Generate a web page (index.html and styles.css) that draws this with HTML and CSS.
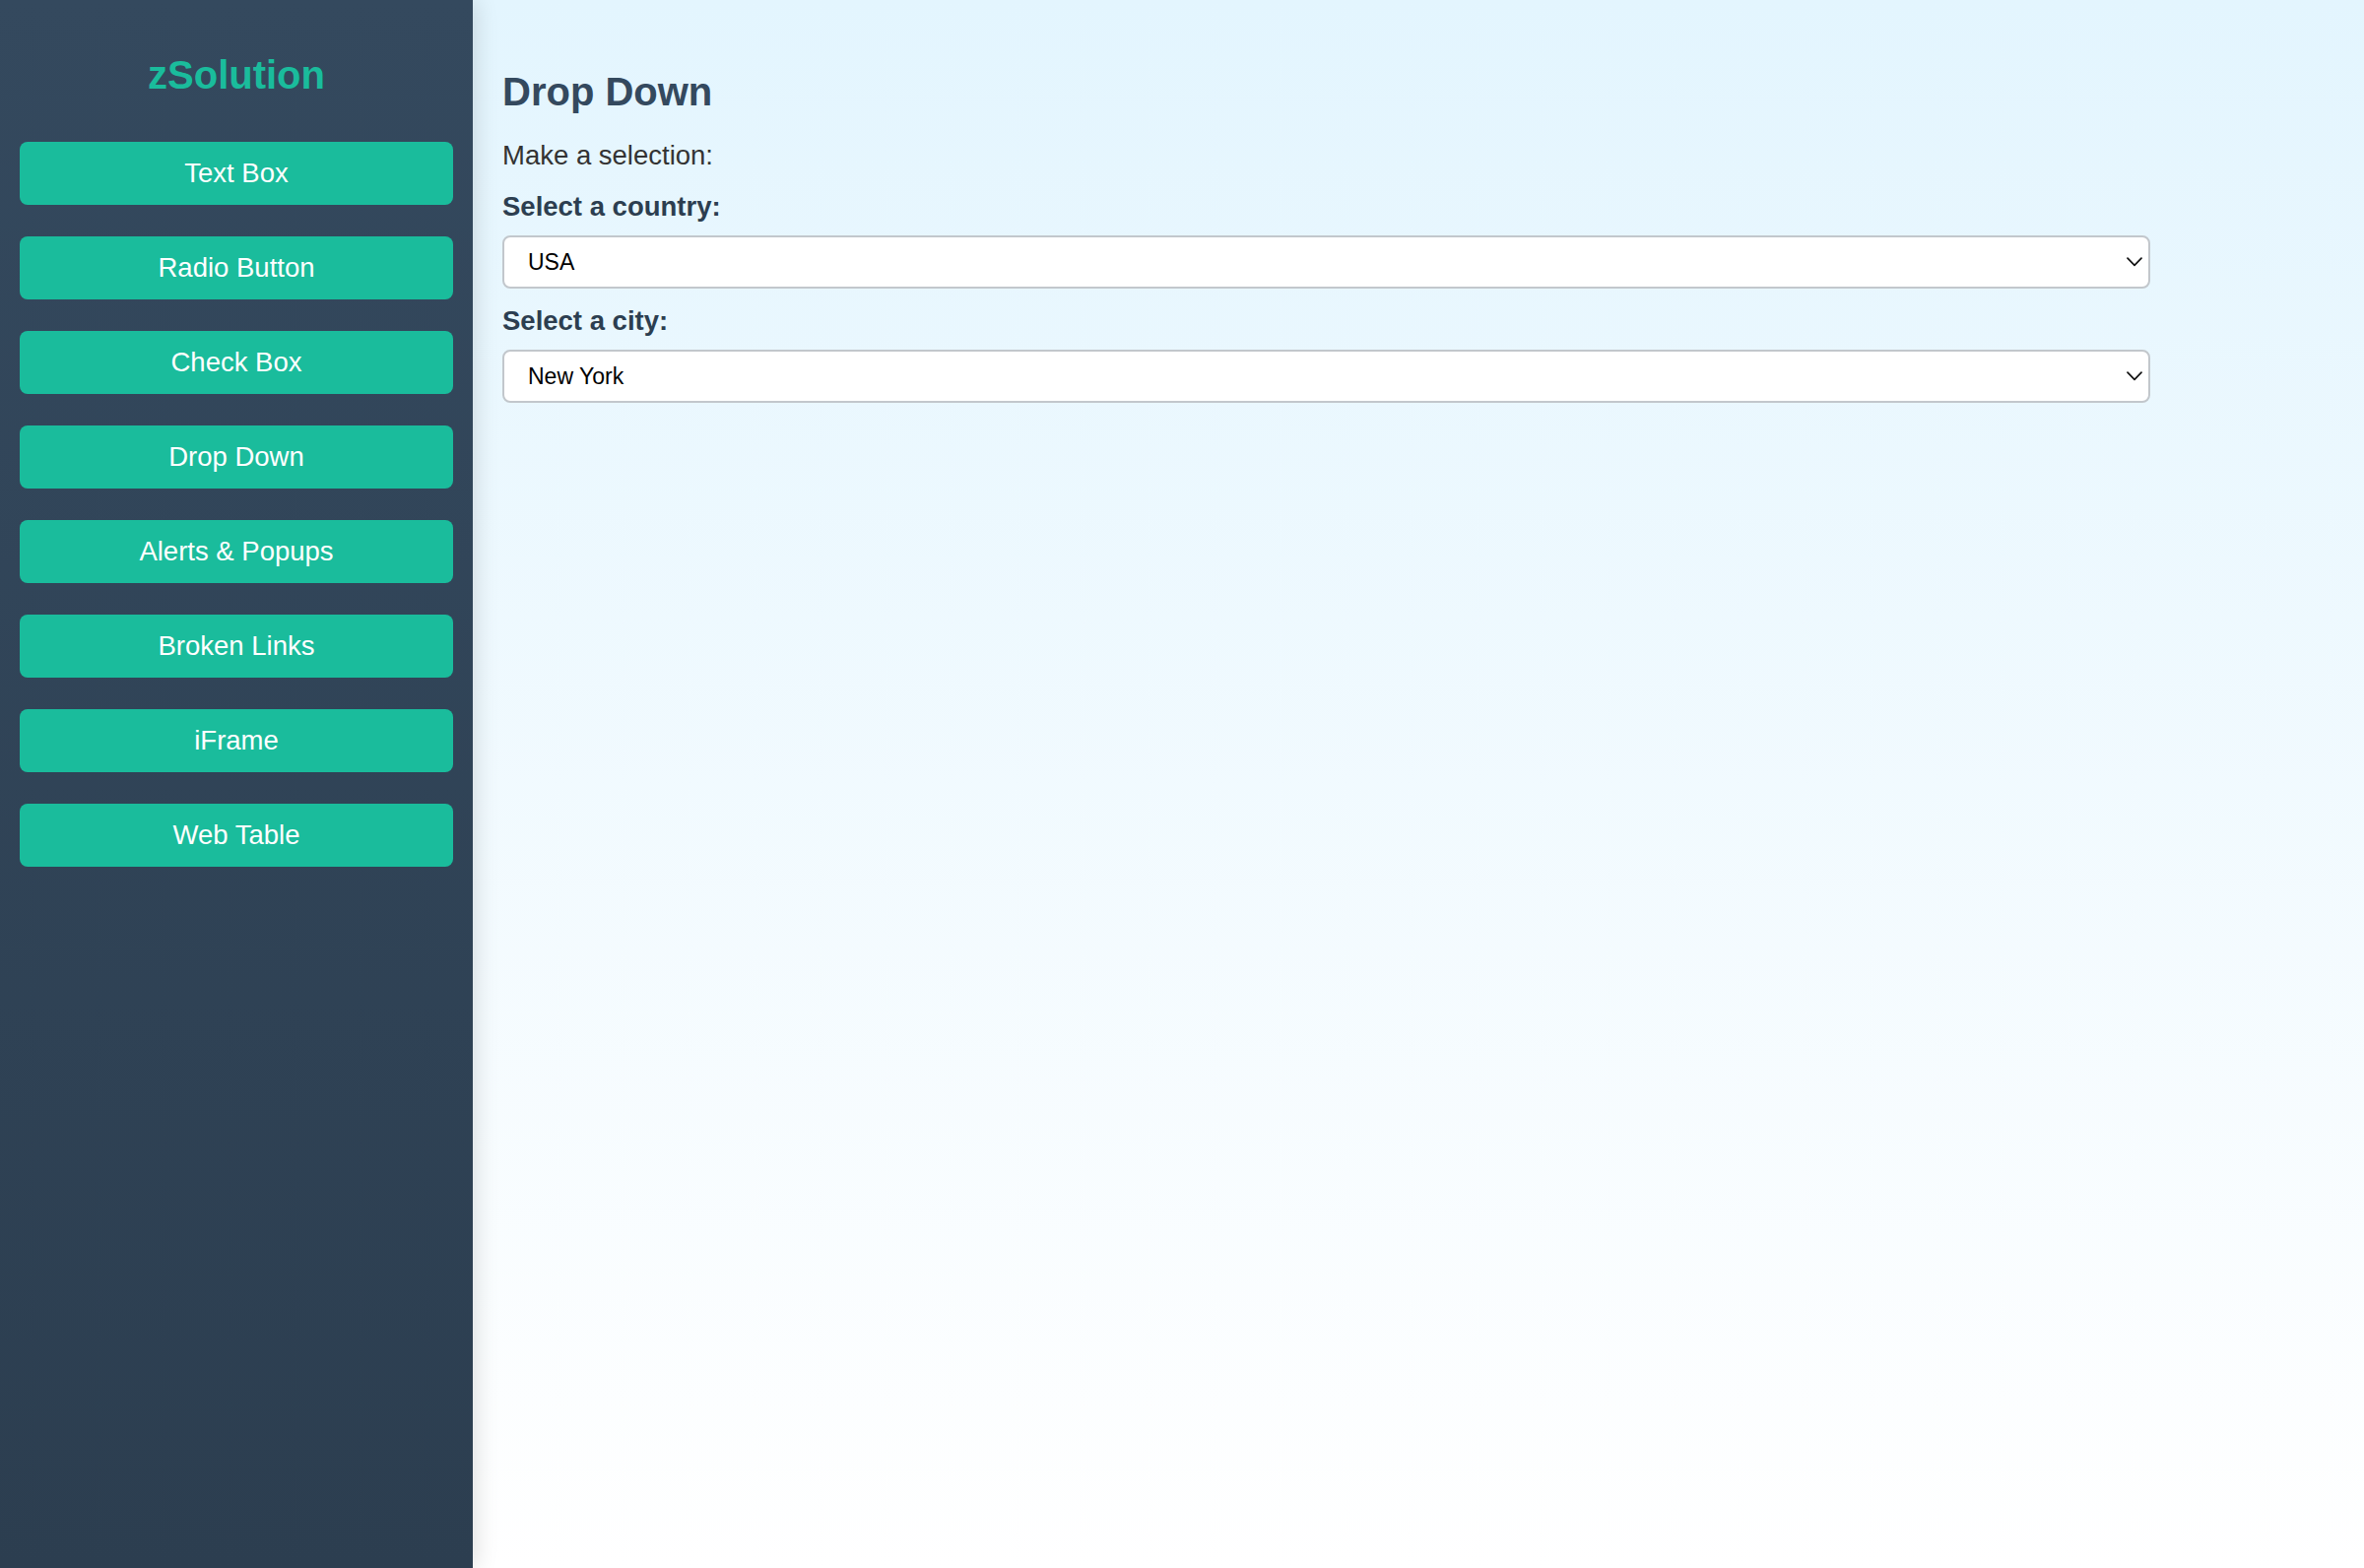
FILE: index.html
```html
<!DOCTYPE html>
<html lang="en">
<head>
<meta charset="utf-8">
<title>zSolution - Drop Down</title>
<link rel="stylesheet" href="styles.css">
</head>
<body>
<div class="layout">
  <aside class="sidebar">
    <h2 class="logo">zSolution</h2>
    <nav class="nav">
      <a class="nav-btn" href="#">Text Box</a>
      <a class="nav-btn" href="#">Radio Button</a>
      <a class="nav-btn" href="#">Check Box</a>
      <a class="nav-btn" href="#">Drop Down</a>
      <a class="nav-btn" href="#">Alerts &amp; Popups</a>
      <a class="nav-btn" href="#">Broken Links</a>
      <a class="nav-btn" href="#">iFrame</a>
      <a class="nav-btn" href="#">Web Table</a>
    </nav>
  </aside>
  <main class="main">
    <h1 class="title">Drop Down</h1>
    <p class="intro">Make a selection:</p>
    <label class="field-label" for="country">Select a country:</label>
    <div class="select-wrap">
      <select id="country" class="select">
        <option>USA</option>
        <option>Canada</option>
        <option>UK</option>
      </select>
      <svg class="chevron" width="16" height="10" viewBox="0 0 16 10" aria-hidden="true"><path d="M1 1.2 L8 8.3 L15 1.2" fill="none" stroke="#111" stroke-width="1.7" stroke-linecap="round" stroke-linejoin="round"/></svg>
    </div>
    <label class="field-label" for="city">Select a city:</label>
    <div class="select-wrap">
      <select id="city" class="select">
        <option>New York</option>
        <option>Los Angeles</option>
        <option>Chicago</option>
      </select>
      <svg class="chevron" width="16" height="10" viewBox="0 0 16 10" aria-hidden="true"><path d="M1 1.2 L8 8.3 L15 1.2" fill="none" stroke="#111" stroke-width="1.7" stroke-linecap="round" stroke-linejoin="round"/></svg>
    </div>
  </main>
</div>
</body>
</html>
```
FILE: styles.css
```css
* {
  box-sizing: border-box;
}

html, body {
  margin: 0;
  padding: 0;
  height: 100%;
}

body {
  font-family: "Liberation Sans", Arial, Helvetica, sans-serif;
}

.layout {
  display: flex;
  min-height: 100vh;
}

.sidebar {
  width: 480px;
  flex: 0 0 480px;
  background: linear-gradient(to bottom, #34495e, #2c3e50);
  padding: 20px;
  position: relative;
  z-index: 1;
  box-shadow: 3px 0 22px rgba(0, 0, 0, 0.13);
}

.logo {
  margin: 33px 0 45px;
  font-size: 40px;
  line-height: 46px;
  font-weight: 700;
  text-align: center;
  color: #1abc9c;
}

.nav {
  display: flex;
  flex-direction: column;
  gap: 32px;
}

.nav-btn {
  display: flex;
  align-items: center;
  justify-content: center;
  height: 64px;
  background: #1abc9c;
  color: #ffffff;
  border-radius: 8px;
  font-size: 27.5px;
  text-decoration: none;
}

.main {
  flex: 1;
  padding: 70px 31px 40px 30px;
  background: linear-gradient(to bottom, #e3f5fe, #ffffff);
}

.title {
  margin: 0 0 26px;
  font-size: 40px;
  line-height: 46px;
  font-weight: 700;
  color: #34495e;
}

.intro {
  margin: 0 0 20px;
  font-size: 27.5px;
  line-height: 32px;
  color: #333333;
}

.field-label {
  display: block;
  margin: 0 0 13px;
  font-size: 27.5px;
  line-height: 32px;
  font-weight: 700;
  color: #2c3e50;
}

.select-wrap {
  position: relative;
  width: 90%;
  margin-bottom: 16.5px;
}

.select {
  display: block;
  width: 100%;
  height: 54px;
  padding: 0 50px 0 24px;
  appearance: none;
  -webkit-appearance: none;
  background: #ffffff;
  border: 2px solid #c2c7cc;
  border-radius: 8px;
  font-family: "Liberation Sans", Arial, Helvetica, sans-serif;
  font-size: 23px;
  color: #000000;
}

.chevron {
  position: absolute;
  right: 8px;
  top: 22px;
  pointer-events: none;
}
```
